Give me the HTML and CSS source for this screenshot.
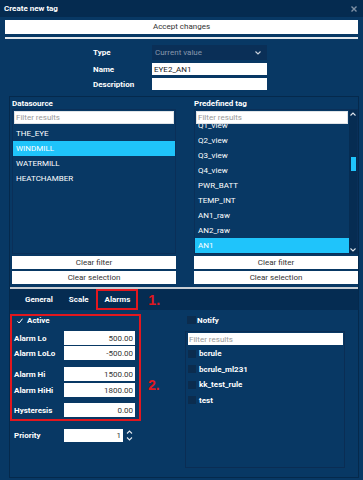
FILE: index.html
```html
<!DOCTYPE html>
<html lang="en">
<head>
    <meta charset="UTF-8">
    <meta name="viewport" content="width=device-width, initial-scale=1.0">
    <title>Create new tag</title>
    <link rel="stylesheet" href="styles.css">
</head>
<body>
    <div class="dialog">
        <div class="titlebar">
            <span class="title">Create new tag</span>
            <svg class="close" width="6" height="6" viewBox="0 0 6 6"><path d="M0.5 0.5 L5.5 5.5 M5.5 0.5 L0.5 5.5" stroke="#7f91a6" stroke-width="1.4"/></svg>
        </div>
        <div class="content">
            <button class="btn accept">Accept changes</button>
            <div class="rule"></div>
            <div class="form">
                <label>Type</label>
                <div class="select">
                    <span>Current value</span>
                    <svg width="6" height="4" viewBox="0 0 6 4"><path d="M0.5 0.5 L3 3 L5.5 0.5" fill="none" stroke="#c9d1da" stroke-width="1.1"/></svg>
                </div>
                <label>Name</label>
                <input class="field" type="text" value="EYE2_AN1">
                <label>Description</label>
                <input class="field" type="text">
            </div>
            <div class="panel">
                <div class="pickers">
                    <div class="picker">
                        <h2>Datasource</h2>
                        <div class="listbox">
                            <ul class="items">
                                <li>THE_EYE</li>
                                <li class="selected">WINDMILL</li>
                                <li>WATERMILL</li>
                                <li>HEATCHAMBER</li>
                            </ul>
                            <input class="filter" type="text" placeholder="Filter results">
                        </div>
                        <button class="btn">Clear filter</button>
                        <button class="btn">Clear selection</button>
                    </div>
                    <div class="picker">
                        <h2>Predefined tag</h2>
                        <div class="listbox scrolled">
                            <ul class="items">
                                <li>Q1_view</li>
                                <li>Q2_view</li>
                                <li>Q3_view</li>
                                <li>Q4_view</li>
                                <li>PWR_BATT</li>
                                <li>TEMP_INT</li>
                                <li>AN1_raw</li>
                                <li>AN2_raw</li>
                                <li class="selected">AN1</li>
                            </ul>
                            <input class="filter" type="text" placeholder="Filter results">
                            <div class="scrollbar">
                                <svg class="arrow-up" width="6" height="4" viewBox="0 0 6 4"><path d="M0.5 3.5 L3 1 L5.5 3.5" fill="none" stroke="#dfe5ec" stroke-width="1.1"/></svg>
                                <div class="thumb"></div>
                                <svg class="arrow-down" width="6" height="4" viewBox="0 0 6 4"><path d="M0.5 0.5 L3 3 L5.5 0.5" fill="none" stroke="#dfe5ec" stroke-width="1.1"/></svg>
                            </div>
                        </div>
                        <button class="btn">Clear filter</button>
                        <button class="btn">Clear selection</button>
                    </div>
                </div>
                <div class="divider"></div>
                <div class="tabs">
                    <span class="tab">General</span>
                    <span class="tab">Scale</span>
                    <span class="tab active">Alarms</span>
                    <span class="mark">1.</span>
                </div>
                <div class="tab-body">
                    <div class="alarm-col">
                        <div class="alarm-wrap">
                            <div class="alarm-box">
                                <div class="active-row">
                                    <svg width="6" height="6" viewBox="0 0 6 6"><path d="M0.5 3.3 L2.2 5 L5.5 0.7" fill="none" stroke="#fff" stroke-width="1"/></svg>
                                    <span>Active</span>
                                </div>
                                <div class="value-row lo">
                                    <label>Alarm Lo</label>
                                    <input class="num" type="text" value="500.00">
                                </div>
                                <div class="value-row lolo">
                                    <label>Alarm LoLo</label>
                                    <input class="num" type="text" value="-500.00">
                                </div>
                                <div class="value-row hi">
                                    <label>Alarm Hi</label>
                                    <input class="num" type="text" value="1500.00">
                                </div>
                                <div class="value-row hihi">
                                    <label>Alarm HiHi</label>
                                    <input class="num" type="text" value="1800.00">
                                </div>
                                <div class="value-row hyst">
                                    <label>Hysteresis</label>
                                    <input class="num" type="text" value="0.00">
                                </div>
                            </div>
                            <span class="mark mark-two">2.</span>
                        </div>
                        <div class="priority-row">
                            <label>Priority</label>
                            <input class="num priority" type="text" value="1">
                            <svg class="spinner" width="7" height="13" viewBox="0 0 7 13"><path d="M1 4.5 L3.5 2 L6 4.5 M1 8.5 L3.5 11 L6 8.5" fill="none" stroke="#e3e8ee" stroke-width="1.1"/></svg>
                        </div>
                    </div>
                    <div class="notify-col">
                        <div class="notify-row">
                            <span class="checkbox wide"></span>
                            <span>Notify</span>
                        </div>
                        <div class="rules-box">
                            <input class="rules-filter" type="text" placeholder="Filter results">
                            <ul class="rules">
                                <li><span class="checkbox"></span>bcrule</li>
                                <li><span class="checkbox"></span>bcrule_ml231</li>
                                <li><span class="checkbox"></span>kk_test_rule</li>
                                <li><span class="checkbox"></span>test</li>
                            </ul>
                        </div>
                    </div>
                </div>
            </div>
        </div>
    </div>
</body>
</html>
```

FILE: styles.css
```css
* {
    box-sizing: border-box;
}
body {
    margin: 0;
    font-family: Roboto, "Liberation Sans", sans-serif;
    font-size: 8px;
    color: #fff;
    background-color: #083864;
}
.dialog {
    width: 363px;
    height: 480px;
    display: flex;
    flex-direction: column;
    overflow: hidden;
}
.titlebar {
    flex: none;
    height: 17px;
    display: flex;
    align-items: center;
    justify-content: space-between;
    padding: 0 6px 0 4px;
    background-color: #052b50;
}
.title {
    font-weight: bold;
}
.close {
    display: block;
}
.content {
    flex: 1;
    min-height: 0;
    display: flex;
    flex-direction: column;
    padding: 0 5px 2px 5px;
}
.btn {
    display: block;
    width: 100%;
    height: 13px;
    padding: 0;
    border: none;
    border-radius: 0;
    background-color: #fff;
    color: #333;
    font-family: inherit;
    font-size: 8px;
    line-height: 13px;
}
.accept {
    height: 14px;
    line-height: 14px;
    margin-top: 3px;
}
.rule {
    height: 2px;
    margin-top: 3px;
    background-color: #e4e8ec;
}
.form {
    display: grid;
    grid-template-columns: 59px 115px;
    grid-template-rows: 15px 12px 12px;
    row-gap: 3px;
    align-items: center;
    margin: 6px 0 0 88px;
}
.form label {
    font-weight: bold;
}
.select {
    height: 15px;
    display: flex;
    align-items: center;
    justify-content: space-between;
    padding: 0 6px 0 3px;
    background-color: #0a2f57;
    color: #8898ad;
}
.select svg {
    display: block;
}
.field {
    height: 12px;
    width: 100%;
    padding: 0 2px;
    border: none;
    border-radius: 0;
    outline: none;
    background-color: #fff;
    color: #222;
    font-family: inherit;
    font-size: 8px;
}
.panel {
    flex: 1;
    margin: 6px -1px 0 4px;
    border: 1px solid #05294c;
    display: flex;
    flex-direction: column;
}
.pickers {
    display: grid;
    grid-template-columns: 164px 164px;
    column-gap: 18px;
    padding: 2px 0 0 2px;
}
.picker h2 {
    margin: 0;
    height: 10px;
    font-size: 8px;
    line-height: 10px;
    font-weight: bold;
}
.listbox {
    position: relative;
    height: 145px;
    border: 1px solid #0a2f58;
    overflow: hidden;
}
.items {
    list-style: none;
    margin: 0;
    padding: 16px 0 0 0;
}
.items li {
    height: 15px;
    line-height: 15px;
    padding-left: 3px;
    white-space: nowrap;
}
.items li.selected {
    background-color: #1fc4fb;
}
.filter {
    position: absolute;
    top: 1px;
    left: 1px;
    right: 1px;
    height: 13px;
    width: auto;
    padding: 0 1px;
    border: 1px solid #dfe3e7;
    border-radius: 0;
    outline: none;
    background-color: #fff;
    color: #222;
    font-family: inherit;
    font-size: 8px;
}
.filter::placeholder,
.rules-filter::placeholder {
    color: #9a9a9a;
}
.scrolled .items {
    padding-top: 8px;
    margin-right: 8px;
}
.scrolled .filter {
    right: 9px;
}
.scrollbar {
    position: absolute;
    top: 0;
    right: 0;
    bottom: 0;
    width: 8px;
    background-color: #062c52;
}
.arrow-up {
    position: absolute;
    top: 2px;
    left: 1px;
}
.arrow-down {
    position: absolute;
    bottom: 1px;
    left: 1px;
}
.thumb {
    position: absolute;
    top: 47px;
    left: 2px;
    width: 5px;
    height: 14px;
    background-color: #1fc4fb;
}
.picker .btn {
    margin-top: 2px;
}
.divider {
    height: 2px;
    margin-top: 3px;
    background-color: #c9ced4;
}
.tabs {
    height: 21px;
    display: flex;
    align-items: stretch;
    padding-left: 15px;
    background-color: #052c52;
}
.tab {
    line-height: 21px;
    font-weight: bold;
}
.tab:first-child {
    margin-right: 16px;
}
.tab:nth-child(2) {
    margin-right: 7px;
}
.tab.active {
    line-height: 17px;
    padding: 0 6px 0 7px;
    border: 2px solid #e2171e;
}
.mark {
    font-family: "Liberation Sans", sans-serif;
    font-size: 14px;
    font-weight: bold;
    color: #e2171e;
    line-height: 21px;
    margin-left: 10px;
    padding-top: 1px;
}
.tab-body {
    flex: 1;
    display: grid;
    grid-template-columns: 175px 160px;
    align-items: start;
}
.alarm-wrap {
    display: flex;
    align-items: flex-start;
}
.alarm-box {
    width: 131px;
    margin-top: 4px;
    padding: 0 4px 2px 2px;
    border: 2px solid #e2171e;
}
.active-row {
    height: 9px;
    display: flex;
    align-items: center;
    padding-left: 3px;
    font-weight: bold;
}
.active-row svg {
    display: block;
    margin-right: 4px;
}
.value-row,
.priority-row {
    display: flex;
    align-items: center;
    height: 14px;
}
.value-row label,
.priority-row label {
    width: 50px;
    flex: none;
    font-weight: bold;
}
.lo {
    margin-top: 6px;
}
.lolo {
    margin-top: 1px;
}
.hi {
    margin-top: 7px;
}
.hihi {
    margin-top: 2px;
}
.hyst {
    margin-top: 6px;
}
.num {
    width: 71px;
    height: 14px;
    padding: 0 2px;
    border: none;
    border-radius: 0;
    outline: none;
    background-color: #fff;
    color: #333;
    text-align: right;
    font-family: inherit;
    font-size: 8px;
}
.mark-two {
    margin-left: 7px;
    margin-top: 64px;
}
.priority-row {
    height: 13px;
    margin-top: 8px;
    padding-left: 4px;
}
.num.priority {
    width: 59px;
    height: 13px;
}
.spinner {
    display: block;
    margin-left: 3px;
}
.notify-col {
    padding: 6px 0 0 0;
}
.notify-row {
    height: 8px;
    display: flex;
    align-items: center;
    padding-left: 2px;
    font-weight: bold;
}
.checkbox {
    display: inline-block;
    width: 8px;
    height: 8px;
    background-color: #0b2c4e;
}
.checkbox.wide {
    width: 9px;
    margin-right: 1px;
}
.rules-box {
    height: 137px;
    margin-top: 7px;
    border: 1px solid #0a2d54;
}
.rules-filter {
    display: block;
    width: 155px;
    height: 12px;
    margin: 1px 0 0 2px;
    padding: 0 1px;
    border: none;
    border-radius: 0;
    outline: none;
    background-color: #fff;
    font-family: inherit;
    font-size: 8px;
}
.rules {
    list-style: none;
    margin: 1px 0 0 0;
    padding: 0;
}
.rules li {
    height: 15.5px;
    display: flex;
    align-items: center;
    padding-left: 2px;
    font-weight: bold;
}
.rules .checkbox {
    margin-right: 3px;
}
```
